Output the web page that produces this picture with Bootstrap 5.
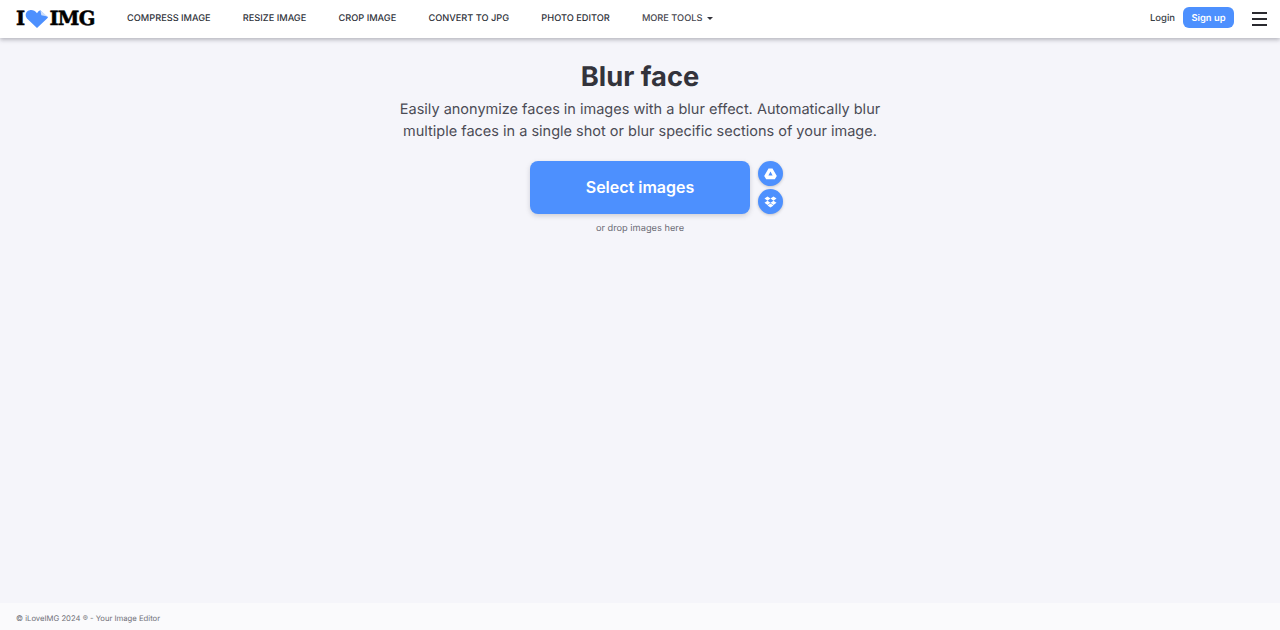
<!DOCTYPE html>
<html lang="en">
<head>
<meta charset="utf-8">
<title>Blur face</title>
<link href="https://cdn.jsdelivr.net/npm/bootstrap@5.3.0/dist/css/bootstrap.min.css" rel="stylesheet">
<style>
html,body{height:100%}
body{font-family:Inter,"Noto Sans",sans-serif;background:#f5f5fa;color:#383e45;text-rendering:geometricPrecision}
.shell{height:630px;overflow:hidden}
.topbar{height:38px;background:#fff;box-shadow:0 2px 4px rgba(72,72,85,.35);padding:0 13px 1px 16px;z-index:2}
.brand{width:79px;color:#000;font-family:"DejaVu Serif",serif;font-weight:700;font-size:19.5px;line-height:1;text-decoration:none;letter-spacing:-.7px;-webkit-text-stroke:.5px #000}
.brand svg{margin:0 0 0 1px;flex:none}
.menu{margin-left:32px;gap:32.2px}
.menu a{font-size:9.22px;font-weight:500;color:#2f333a;text-decoration:none;line-height:36px;white-space:nowrap}
.menu a.muted{color:#47474f}
.caret{display:inline-block;border:3.500px solid transparent;border-top-color:#33333b;border-bottom:0;margin-left:5px;vertical-align:1px}
.login{font-size:9.5px;font-weight:500;color:#383e45;text-decoration:none;margin:2px 8px 0 0}
.signup{background:#4d90fe;color:#fff;font-size:9.35px;font-weight:600;border-radius:6px;width:51px;height:21px;line-height:23px;text-align:center;text-decoration:none;margin-bottom:2px}
.burger{width:15px;margin-left:18px;gap:4px}
.burger i{display:block;height:2px;background:#2a2a30}
.hero{padding-top:22px}
.hero h1{font-size:27.3px;font-weight:700;color:#33333b;line-height:34px;margin:0 0 5px}
.hero p{font-size:14.5px;line-height:22px;color:#4b4b55;margin:0 0 18px;width:490px}
.uploader{width:220px;height:53px}
.pick{width:220px;height:53px;background:#4d90fe;color:#fff;border:0;border-radius:8px;font-size:16px;font-weight:600;padding:0 0 2px;box-shadow:0 2px 5px rgba(72,72,85,.22)}
.cloud{left:228px;top:0;gap:3px}
.cloud span{width:25px;height:25px;border-radius:50%;background:#4d90fe;box-shadow:0 1px 3px rgba(72,72,85,.3)}
.drop{font-size:9.25px;color:#6b6b75;margin-top:8px;line-height:14px}
.foot{height:27px;background:#fafafc;font-size:7.7px;color:#707078;padding-left:16px;line-height:31px}
</style>
</head>
<body>
<div class="shell d-flex flex-column">
  <header class="topbar d-flex align-items-center position-relative">
    <a class="brand d-flex align-items-center" href="#">I<svg width="24" height="20" viewBox="0 0 25 20"><path d="M12.500 19.500 2 9.500C-.500 6.500.500 1.500 5 .800 8 .300 10.500 1.500 12.500 4 13.500 2.500 14.500 1.500 16 1L21 6 24 8C23.800 8.500 23.500 9 23 9.500Z" fill="#4d90fe"/><path d="M16 1 17 6 23.500 7.500Z" fill="#cfe0fb"/></svg>IMG</a>
    <nav class="menu d-flex">
      <a href="#">COMPRESS IMAGE</a>
      <a href="#">RESIZE IMAGE</a>
      <a href="#">CROP IMAGE</a>
      <a href="#">CONVERT TO JPG</a>
      <a href="#">PHOTO EDITOR</a>
      <a class="muted" href="#">MORE TOOLS<span class="caret"></span></a>
    </nav>
    <div class="ms-auto d-flex align-items-center">
      <a class="login" href="#">Login</a>
      <a class="signup" href="#">Sign up</a>
      <div class="burger d-flex flex-column"><i></i><i></i><i></i></div>
    </div>
  </header>
  <main class="hero flex-grow-1 d-flex flex-column align-items-center text-center">
    <h1>Blur face</h1>
    <p>Easily anonymize faces in images with a blur effect. Automatically blur multiple faces in a single shot or blur specific sections of your image.</p>
    <div class="uploader position-relative">
      <button class="pick" type="button">Select images</button>
      <div class="cloud position-absolute d-flex flex-column">
        <span class="d-flex align-items-center justify-content-center"><svg width="13" height="12" viewBox="0 0 13 12"><path fill="#fff" fill-rule="evenodd" d="M4.500.500H8.500L12.800 8 10.800 11.300H2.200L.200 8ZM6.500 3.500 4.400 7.500H8.600Z"/></svg></span>
        <span class="d-flex align-items-center justify-content-center"><svg width="13" height="12" viewBox="0 0 13 12"><path fill="#fff" d="M3.500.500 6.500 2.500 3.500 4.700.500 2.500ZM9.500.500 12.500 2.500 9.500 4.700 6.500 2.500ZM.500 6.800 3.500 4.700 6.500 6.800 3.500 8.900ZM6.500 6.800 9.500 4.700 12.500 6.800 9.500 8.900ZM3.500 9.600 6.500 7.600 9.500 9.600 6.500 11.600Z"/></svg></span>
      </div>
    </div>
    <div class="drop">or drop images here</div>
  </main>
  <footer class="foot">© iLoveIMG 2024 ® - Your Image Editor</footer>
</div>
<script src="https://cdn.jsdelivr.net/npm/bootstrap@5.3.0/dist/js/bootstrap.bundle.min.js"></script>
</body>
</html>
